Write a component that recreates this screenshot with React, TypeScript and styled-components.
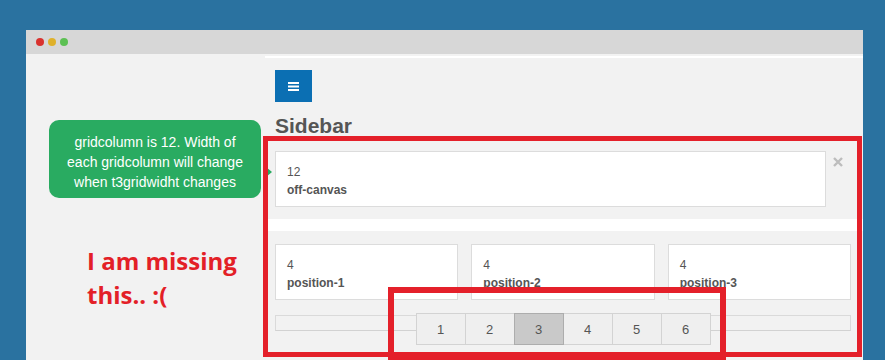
import React from "react";
import styled, { createGlobalStyle } from "styled-components";

const Global = createGlobalStyle`
  html, body { margin: 0; padding: 0; }
  body {
    background: #2a72a0;
    font-family: "Liberation Sans", Arial, sans-serif;
    height: 360px;
    overflow: hidden;
  }
`;

const Window = styled.div`
  position: relative;
  margin: 30px 0 0 26px;
  width: 837px;
  height: 330px;
  background: #f2f2f2;
  overflow: hidden;
  display: flex;
  flex-direction: column;
`;

const TitleBar = styled.div`
  height: 24px;
  background: #d7d7d7;
  display: flex;
  align-items: center;
  gap: 4px;
  padding-left: 10px;
  flex-shrink: 0;
`;

const Dot = styled.span<{ $c: string }>`
  width: 8px;
  height: 8px;
  border-radius: 50%;
  background: ${(p) => p.$c};
`;

const Body = styled.div`
  display: flex;
  flex: 1;
`;

const LeftCol = styled.div`
  width: 239px;
  flex-shrink: 0;
  padding: 66px 0 0 23px;
  box-sizing: border-box;
`;

const Bubble = styled.div`
  position: relative;
  width: 212px;
  box-sizing: border-box;
  background: #29ab61;
  color: #fff;
  border-radius: 10px;
  padding: 12px 4px 6px;
  font-size: 14px;
  line-height: 20px;
  text-align: center;
  &::after {
    content: "";
    position: absolute;
    right: -11px;
    top: 47px;
    border-style: solid;
    border-width: 5px 0 5px 6px;
    border-color: transparent transparent transparent #29ab61;
  }
`;

const Missing = styled.div`
  margin: 46px 0 0 38px;
  font-family: "Open Sans", sans-serif;
  font-weight: 700;
  font-size: 24px;
  line-height: 34px;
  color: #e32027;
`;

const MainCol = styled.div`
  flex: 1;
  margin-top: 2px;
  border-top: 2px solid #fff;
  display: flex;
  flex-direction: column;
`;

const Section = styled.div`
  padding: 0 12px 0 10px;
  display: flex;
  flex-direction: column;
`;

const MenuButton = styled.button`
  margin-top: 12px;
  width: 37px;
  height: 32px;
  border: none;
  padding: 0;
  background: #0b6fb3;
  display: flex;
  align-items: center;
  justify-content: center;
`;

const Heading = styled.h2`
  margin: 12px 0 0;
  font-size: 21px;
  line-height: 24px;
  font-weight: 700;
  color: #555;
`;

const OffRow = styled.div`
  margin-top: 13px;
  display: flex;
  align-items: flex-start;
  gap: 7px;
`;

const Block = styled.div<{ $w?: number }>`
  box-sizing: border-box;
  width: ${(p) => (p.$w ? `${p.$w}px` : "auto")};
  flex: ${(p) => (p.$w ? "none" : "1")};
  height: 56px;
  background: #fff;
  border: 1px solid #dcdcdc;
  padding: 11px 11px 7px;
  font-size: 12px;
  line-height: 18px;
  color: #555;
`;

const BlockName = styled.div`
  font-weight: 700;
`;

const CloseIcon = styled.svg`
  margin-top: 6px;
`;

const Band = styled.div`
  margin-top: 12px;
  height: 12px;
  background: #fff;
`;

const PosRow = styled.div`
  margin-top: 13px;
  display: grid;
  grid-template-columns: repeat(3, 1fr);
  gap: 13px;
`;

const Stack = styled.div`
  margin-top: 13px;
  display: grid;
`;

const Bar = styled.div`
  grid-area: 1 / 1;
  align-self: start;
  margin-top: 2px;
  height: 16px;
  border: 1px solid #dadada;
  border-bottom-color: #d2d2d2;
  box-sizing: border-box;
`;

const Pager = styled.div`
  grid-area: 1 / 1;
  justify-self: center;
  display: flex;
`;

const PageBtn = styled.div<{ $active?: boolean }>`
  width: 50px;
  height: 32px;
  box-sizing: border-box;
  margin-left: -1px;
  &:first-child { margin-left: 0; }
  border: 1px solid ${(p) => (p.$active ? "#adadad" : "#d3d3d3")};
  background: ${(p) => (p.$active ? "#c9c9c9" : "#efefef")};
  position: relative;
  z-index: ${(p) => (p.$active ? 1 : 0)};
  display: flex;
  align-items: center;
  justify-content: center;
  font-size: 13px;
  color: #555;
`;

const Mark = styled.div<{ $l: number; $t: number; $w: number; $h: number; $b: number }>`
  position: absolute;
  left: ${(p) => p.$l}px;
  top: ${(p) => p.$t}px;
  width: ${(p) => p.$w}px;
  height: ${(p) => p.$h}px;
  box-sizing: border-box;
  border: ${(p) => p.$b}px solid #e4202a;
  pointer-events: none;
`;

export default function App() {
  return (
    <>
      <Global />
      <Window>
        <TitleBar>
          <Dot $c="#d9322e" />
          <Dot $c="#dfb12b" />
          <Dot $c="#5cc053" />
        </TitleBar>
        <Body>
          <LeftCol>
            <Bubble>
              gridcolumn is 12. Width of
              <br />
              each gridcolumn will change
              <br />
              when t3gridwidht changes
            </Bubble>
            <Missing>
              I am missing
              <br />
              this.. :(
            </Missing>
          </LeftCol>
          <MainCol>
            <Section>
              <MenuButton aria-label="menu">
                <svg width="11" height="9" viewBox="0 0 11 9">
                  <rect x="0" y="0" width="11" height="2" fill="#fff" />
                  <rect x="0" y="3.5" width="11" height="2" fill="#fff" />
                  <rect x="0" y="7" width="11" height="2" fill="#fff" />
                </svg>
              </MenuButton>
              <Heading>Sidebar</Heading>
              <OffRow>
                <Block $w={551}>
                  <div>12</div>
                  <BlockName>off-canvas</BlockName>
                </Block>
                <CloseIcon width="10" height="10" viewBox="0 0 10 10">
                  <path d="M1 1L9 9M9 1L1 9" stroke="#bdbdbd" strokeWidth="2.4" />
                </CloseIcon>
              </OffRow>
            </Section>
            <Band />
            <Section>
              <PosRow>
                {[1, 2, 3].map((n) => (
                  <Block key={n}>
                    <div>4</div>
                    <BlockName>position-{n}</BlockName>
                  </Block>
                ))}
              </PosRow>
              <Stack>
                <Bar />
                <Pager>
                  {[1, 2, 3, 4, 5, 6].map((n) => (
                    <PageBtn key={n} $active={n === 3}>
                      {n}
                    </PageBtn>
                  ))}
                </Pager>
              </Stack>
            </Section>
          </MainCol>
        </Body>
        <Mark $l={237} $t={106} $w={599} $h={221} $b={5} />
        <Mark $l={362} $t={257} $w={338} $h={73} $b={6} />
      </Window>
    </>
  );
}
